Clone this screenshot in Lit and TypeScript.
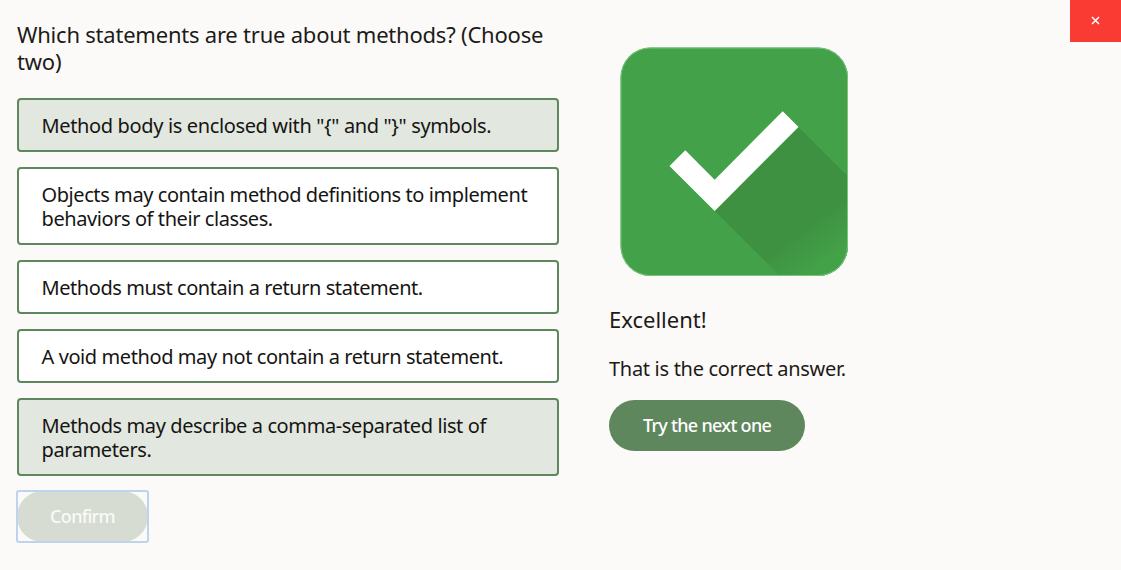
import { LitElement, html, css } from 'lit';
import { customElement, state } from 'lit/decorators.js';

interface Choice {
  text: string;
  spacing: number;
  selected: boolean;
}

@customElement('result-icon')
class ResultIcon extends LitElement {
  static styles = css`
    :host { display: block; width: 228px; height: 229px; }
    svg { display: block; }
  `;

  render() {
    return html`
      <svg width="228" height="229" viewBox="620 47 228 229" role="img" aria-label="Correct">
        <defs>
          <linearGradient id="fade" gradientUnits="userSpaceOnUse" x1="777" y1="247" x2="801" y2="279">
            <stop offset="0" stop-color="#3d9141" />
            <stop offset="1" stop-color="#43a148" />
          </linearGradient>
          <clipPath id="tile"><rect x="620.5" y="47.5" width="227.5" height="228.5" rx="30" /></clipPath>
        </defs>
        <rect x="620.5" y="47.5" width="227.5" height="228.5" rx="30" fill="#43a249" />
        <path clip-path="url(#tile)" fill="url(#fade)" d="M798.5 127 L858 186.500 V286 H789.700 L714.700 211 Z" />
        <rect x="621" y="48" width="226.500" height="227.500" rx="29.500" fill="none" stroke="#7ac47e" stroke-width="1" />
        <path fill="#fff" d="M669.500 166 L685.300 150.300 L714.700 179.700 L782.700 111.300 L798.500 127 L714.700 211 Z" />
      </svg>
    `;
  }
}

@customElement('app-root')
class AppRoot extends LitElement {
  @state() private choices: Choice[] = [
    { text: 'Method body is enclosed with "{" and "}" symbols.', spacing: -0.36, selected: true },
    { text: 'Objects may contain method definitions to implement behaviors of their classes.', spacing: -0.42, selected: false },
    { text: 'Methods must contain a return statement.', spacing: -0.44, selected: false },
    { text: 'A void method may not contain a return statement.', spacing: -0.41, selected: false },
    { text: 'Methods may describe a comma-separated list of parameters.', spacing: -0.39, selected: true },
  ];

  static styles = css`
    :host {
      display: block;
      position: relative;
      box-sizing: border-box;
      width: 100%;
      height: 570px;
      overflow: hidden;
      background: #fcfaf8;
      color: #1c1b19;
      font-family: "Noto Sans", sans-serif;
      font-size: 20px;
      line-height: 24px;
    }
    .page { display: grid; grid-template-columns: 542px 1fr; column-gap: 50px; padding: 21px 0 0 17px; }
    h1, h2, p { margin: 0; font-weight: 400; }
    h1, h2 { font-size: 22px; line-height: 27px; }
    h1 { letter-spacing: -0.22px; }
    button { font: inherit; border: 0; padding: 0; margin: 0; }
    .question { display: flex; flex-direction: column; align-items: stretch; }
    .choices { display: flex; flex-direction: column; gap: 15px; margin: 23px 0 15px; }
    .choice {
      box-sizing: border-box;
      padding: 14px 22px 12px 22.5px;
      border: 2px solid #5f875e;
      border-radius: 4px;
      background: #fff;
      color: #161513;
      text-align: left;
    }
    .selected { background: #e2e7e0; }
    .pill {
      box-sizing: border-box;
      align-self: flex-start;
      height: 51px;
      padding-bottom: 2px;
      border-radius: 26px;
      background: #5f875d;
      color: #fff;
      font-size: 18px;
      font-weight: 550;
      letter-spacing: -0.7px;
    }
    .confirm { width: 131px; position: relative; background: #d6dcd2; color: #f9faf8; }
    .confirm::after {
      content: "";
      position: absolute;
      inset: -1px;
      border: 2px solid #bdd4ee;
      border-radius: 3px;
    }
    .result { display: flex; flex-direction: column; align-items: flex-start; padding-top: 26px; }
    result-icon { margin-left: 11px; }
    .result h2 { margin-top: 30px; }
    .result p { margin-top: 24px; letter-spacing: -0.3px; }
    .next { width: 196px; margin-top: 19px; }
    .close {
      position: absolute;
      top: 0;
      right: 0;
      display: flex;
      align-items: center;
      justify-content: center;
      width: 51px;
      height: 42px;
      padding-bottom: 1px;
      background: #fa3b34;
    }
  `;

  private toggle(index: number) {
    this.choices = this.choices.map((c, i) => (i === index ? { ...c, selected: !c.selected } : c));
  }

  render() {
    return html`
      <main class="page">
        <section class="question">
          <h1>Which statements are true about methods? (Choose two)</h1>
          <div class="choices">
            ${this.choices.map((c, i) => html`
              <button class="choice ${c.selected ? 'selected' : ''}" style="letter-spacing:${c.spacing}px" @click=${() => this.toggle(i)}>${c.text}</button>
            `)}
          </div>
          <button class="pill confirm">Confirm</button>
        </section>
        <section class="result">
          <result-icon></result-icon>
          <h2>Excellent!</h2>
          <p>That is the correct answer.</p>
          <button class="pill next">Try the next one</button>
        </section>
      </main>
      <button class="close" aria-label="Close">
        <svg width="9" height="9" viewBox="0 0 9 9"><path d="M1 1 L8 8 M8 1 L1 8" stroke="#fff" stroke-width="1.500" fill="none" /></svg>
      </button>
    `;
  }
}
